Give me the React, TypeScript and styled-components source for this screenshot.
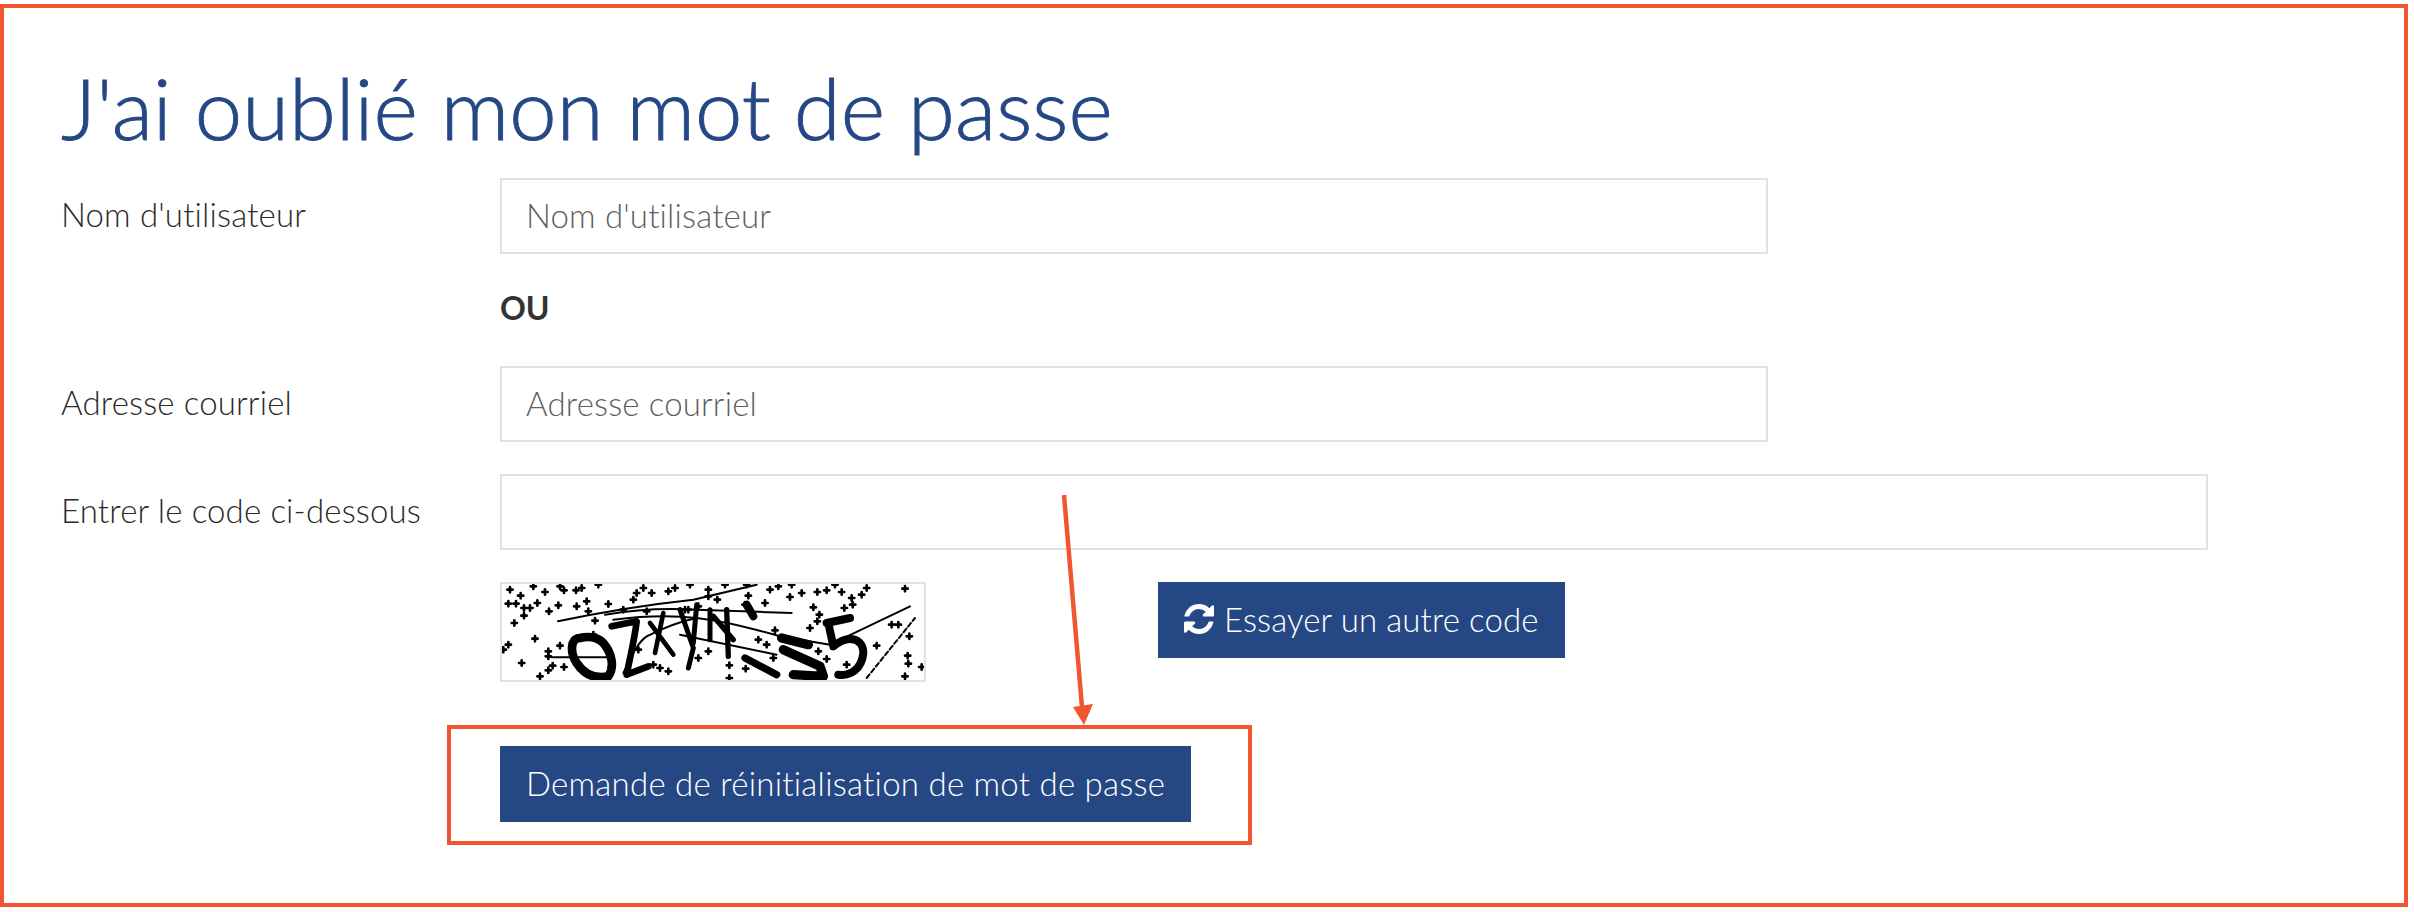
import React from 'react';
import styled, { createGlobalStyle } from 'styled-components';

const navy = '#254885';
const red = '#f0562f';
const line = '#dee2e6';

const GlobalStyle = createGlobalStyle`
  html, body {
    margin: 0;
    padding: 0;
    background: #fff;
  }
  body {
    font-family: Lato, "Liberation Sans", sans-serif;
    color: #2a2a2a;
  }
`;

const Frame = styled.main`
  box-sizing: border-box;
  width: 2408px;
  height: 903px;
  margin-top: 4px;
  padding: 43px 0 0 57px;
  border: 4px solid ${red};
  position: relative;
`;

const Title = styled.h1`
  margin: 0 0 15px;
  height: 112px;
  font-size: 85px;
  line-height: 112px;
  font-weight: 300;
  color: ${navy};
  -webkit-text-stroke: 0.9px ${navy};
`;

const Row = styled.div`
  display: grid;
  grid-template-columns: 439px auto;
  align-items: center;
`;

const FieldRow = styled(Row)<{ $gap: number }>`
  margin-bottom: ${(p) => p.$gap}px;
`;

const Label = styled.label`
  padding-bottom: 4px;
  font-size: 33px;
  font-weight: 300;
  letter-spacing: 0.15px;
`;

const Input = styled.input<{ $wide?: boolean }>`
  box-sizing: border-box;
  display: block;
  width: ${(p) => (p.$wide ? 1708 : 1268)}px;
  height: 76px;
  padding: 0 24px 2px;
  border: 2px solid ${line};
  border-radius: 0;
  background: #fff;
  outline: none;
  font-family: inherit;
  font-size: 33px;
  font-weight: 300;
  letter-spacing: 0.15px;

  &::placeholder {
    color: #5f5f5f;
    opacity: 1;
  }
`;

const Or = styled.strong`
  grid-column: 2;
  font-size: 32px;
  font-weight: 700;
  line-height: 40px;
  color: #333;
`;

const CaptchaRow = styled.div`
  display: flex;
  align-items: flex-start;
  gap: 232px;
  margin: 32px 0 0 439px;
`;

const CaptchaBox = styled.div`
  box-sizing: border-box;
  width: 426px;
  height: 100px;
  border: 2px solid ${line};
  background: #fff;
  overflow: hidden;

  svg {
    display: block;
    filter: blur(0.5px);
  }
`;

const Button = styled.button`
  display: inline-flex;
  align-items: center;
  gap: 10px;
  box-sizing: border-box;
  height: 76px;
  padding: 0 26px 2px;
  border: 0;
  border-radius: 0;
  background: ${navy};
  color: #fff;
  font-family: inherit;
  font-size: 33px;
  font-weight: 300;
  letter-spacing: 0.25px;
  white-space: nowrap;
`;

const RetryButton = styled(Button)`
  letter-spacing: 0.1px;
`;

const SubmitRow = styled.div`
  margin: 64px 0 0 439px;
`;

const SubmitWrap = styled.div`
  position: relative;
  display: inline-block;
`;

const Highlight = styled.div`
  position: absolute;
  top: -21px;
  bottom: -23px;
  left: -53px;
  right: -61px;
  border: 4px solid ${red};
  pointer-events: none;
`;

const Arrow = styled.svg`
  position: absolute;
  left: 1050px;
  top: 483px;
  pointer-events: none;
`;

const RefreshIcon: React.FC = () => (
  <svg width="30" height="30" viewBox="128 128 1536 1536" fill="currentColor" aria-hidden="true">
    <path d="M1639 1056q0 5-1 7-64 268-268 434.5t-478 166.5q-146 0-282.5-55t-243.5-157l-129 129q-19 19-45 19t-45-19-19-45v-448q0-26 19-45t45-19h448q26 0 45 19t19 45-19 45l-137 137q71 66 161 102t187 36q134 0 250-65t186-179q11-17 53-117 8-23 30-23h192q13 0 22.5 9.5t9.5 22.5zm25-800v448q0 26-19 45t-45 19h-448q-26 0-45-19t-19-45 19-45l138-138q-148-137-349-137-134 0-250 65t-186 179q-11 17-53 117-8 23-30 23h-199q-13 0-22.5-9.5t-9.5-22.5v-7q65-268 270-434.5t480-166.5q146 0 284 55.5t245 156.5l130-129q19-19 45-19t45 19 19 45z" />
  </svg>
);

// noise of the captcha picture: small crosses, as [x, y]
const crosses: [number, number][] = [
  [90, 90], [122, 108], [160, 80], [195, 97], [240, 80], [252, 92], [288, 92], [305, 85], [355, 75], [85, 132],
  [108, 132], [132, 145], [150, 145], [172, 130], [207, 155], [235, 137], [132, 168], [103, 190], [290, 140], [320, 125],
  [325, 155], [385, 133], [345, 183], [430, 150], [460, 120], [470, 100], [490, 85], [515, 100], [565, 95], [585, 85],
  [630, 75], [685, 90], [685, 110], [712, 120], [735, 75], [805, 108], [795, 135], [855, 130], [800, 75], [870, 90],
  [895, 80], [935, 75], [930, 112], [965, 100], [1012, 97], [1040, 92], [1065, 75], [1085, 97], [1115, 115], [1145, 105],
  [1160, 85], [1275, 87], [1118, 135], [1093, 145], [1000, 143], [1018, 165], [1012, 185], [990, 205], [165, 237], [85, 255],
  [70, 270], [240, 258], [205, 275], [205, 290], [125, 310], [218, 318], [252, 322], [205, 332], [180, 350], [340, 225],
  [475, 270], [520, 315], [540, 325], [565, 335], [625, 150], [655, 140], [615, 150], [500, 155], [885, 212], [835, 240],
  [860, 255], [880, 295], [1015, 275], [1040, 298], [1190, 258], [1288, 230], [1283, 288], [1285, 312], [1235, 195], [1255, 195],
  [748, 317], [797, 327], [748, 355], [1100, 315], [1275, 350], [1325, 322], [655, 295], [685, 275],
];

// strokes of the captcha picture
const heavy: [string, number][] = [
  ['M300 235C270 235 270 280 290 310C310 340 340 360 385 350C405 320 395 280 370 250C350 230 320 230 300 235', 26],
  ['M395 200L470 185C465 230 455 270 440 345L505 320', 20],
  ['M550 160L525 280M510 190L580 285', 14],
  ['M600 150L640 265L625 325M650 135L640 250M690 150L690 240', 15],
  ['M740 150L745 290M700 170L760 240', 16],
  ['M795 295L890 345', 22],
  ['M800 135L820 170', 24],
  ['M905 235L985 255M910 270L1020 320L1030 350L940 345', 28],
  ['M1040 190L1110 175M1045 190L1060 260C1110 220 1150 240 1150 280C1145 330 1110 350 1075 345', 24],
];

const thin = [
  'M234 185C350 160 500 135 640 120L830 75',
  'M375 165C460 150 560 145 650 150L935 160',
  'M400 180C480 170 560 165 650 175C740 185 830 210 900 230L1050 255',
  'M600 225L890 285',
  'M215 293L380 293',
  'M1050 255L1290 140',
  'M430 340C450 300 470 250 500 230C560 200 600 185 650 175',
];

const Captcha: React.FC = () => (
  <CaptchaBox>
    <svg width="422" height="96" viewBox="66 73 1266 288" role="img" aria-label="Captcha">
      <g fill="none" stroke="#000" strokeLinecap="round" strokeLinejoin="round">
        {heavy.map(([d, w]) => (
          <path key={d} d={d} strokeWidth={w} />
        ))}
        {thin.map((d) => (
          <path key={d} d={d} strokeWidth="6" />
        ))}
        <path d="M1160 355L1305 175" strokeWidth="6" strokeDasharray="14 8" />
        <g strokeWidth="8">
          {crosses.map(([x, y]) => (
            <path key={`${x}-${y}`} d={`M${x - 8} ${y}H${x + 8}M${x} ${y - 8}V${y + 8}`} />
          ))}
        </g>
      </g>
    </svg>
  </CaptchaBox>
);

const App: React.FC = () => (
  <>
    <GlobalStyle />
    <Frame>
      <Title>J'ai oublié mon mot de passe</Title>
      <FieldRow $gap={34}>
        <Label>Nom d'utilisateur</Label>
        <Input placeholder="Nom d'utilisateur" />
      </FieldRow>
      <FieldRow $gap={38}>
        <Or>OU</Or>
      </FieldRow>
      <FieldRow $gap={32}>
        <Label>Adresse courriel</Label>
        <Input placeholder="Adresse courriel" />
      </FieldRow>
      <Row>
        <Label>Entrer le code ci-dessous</Label>
        <Input $wide />
      </Row>
      <CaptchaRow>
        <Captcha />
        <RetryButton>
          <RefreshIcon />
          Essayer un autre code
        </RetryButton>
      </CaptchaRow>
      <SubmitRow>
        <SubmitWrap>
          <Highlight />
          <Button>Demande de réinitialisation de mot de passe</Button>
        </SubmitWrap>
      </SubmitRow>
      <Arrow width="50" height="240" viewBox="0 0 50 240">
        <path d="M10 4L28 216" stroke={red} strokeWidth="4.5" fill="none" />
        <path d="M19 216L39 213L30 234Z" fill={red} />
      </Arrow>
    </Frame>
  </>
);

export default App;
